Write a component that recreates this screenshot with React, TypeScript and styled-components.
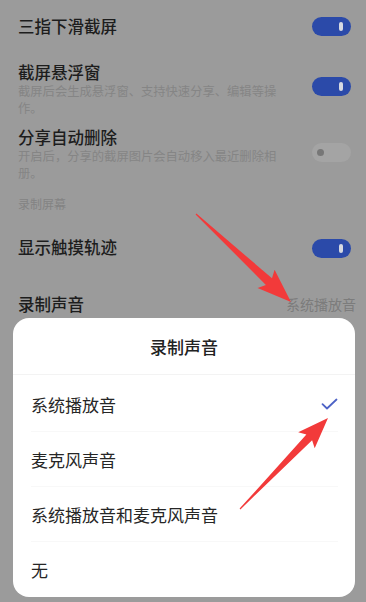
import React from "react";
import styled, { createGlobalStyle } from "styled-components";

const GlobalStyle = createGlobalStyle`
  html, body {
    margin: 0;
    padding: 0;
    background: #9b9b9b;
  }
  body {
    font-family: "Noto Sans CJK SC", "Noto Sans", sans-serif;
  }
`;

type Point = [number, number];

// builds a tapered arrow outline from tail to tip
const arrowPoints = (
  tail: Point,
  tip: Point,
  headLen: number,
  headW: number,
  shaftW: number
) => {
  const dx = tip[0] - tail[0];
  const dy = tip[1] - tail[1];
  const len = Math.hypot(dx, dy);
  const ux = dx / len;
  const uy = dy / len;
  const nx = -uy;
  const ny = ux;
  const bx = tip[0] - ux * headLen;
  const by = tip[1] - uy * headLen;
  const wx = bx - ux * 4;
  const wy = by - uy * 4;
  const pts: Point[] = [
    [tail[0] + nx * 0.6, tail[1] + ny * 0.6],
    [bx + (nx * shaftW) / 2, by + (ny * shaftW) / 2],
    [wx + (nx * headW) / 2, wy + (ny * headW) / 2],
    tip,
    [wx - (nx * headW) / 2, wy - (ny * headW) / 2],
    [bx - (nx * shaftW) / 2, by - (ny * shaftW) / 2],
    [tail[0] - nx * 0.6, tail[1] - ny * 0.6],
  ];
  return pts.map((p) => `${p[0].toFixed(1)},${p[1].toFixed(1)}`).join(" ");
};

const settings = [
  {
    title: "三指下滑截屏",
    on: true,
  },
  {
    title: "截屏悬浮窗",
    sub: "截屏后会生成悬浮窗、支持快速分享、编辑等操作。",
    on: true,
  },
  {
    title: "分享自动删除",
    sub: "开启后，分享的截屏图片会自动移入最近删除相册。",
    on: false,
  },
];

const options = ["系统播放音", "麦克风声音", "系统播放音和麦克风声音", "无"];

const Toggle = ({ on }: { on: boolean }) => (
  <Switch $on={on}>
    <Knob $on={on} />
  </Switch>
);

export default function App() {
  return (
    <Page>
      <GlobalStyle />
      <List>
        {settings.map((s, i) => (
          <Row key={s.title} $gap={[0, 24, 9][i]}>
            <RowText>
              <RowTitle>{s.title}</RowTitle>
              {s.sub && <RowSub>{s.sub}</RowSub>}
            </RowText>
            <ToggleSlot $top={s.sub ? (s.on ? 16 : 17) : 2}>
              <Toggle on={s.on} />
            </ToggleSlot>
          </Row>
        ))}
        <SectionLabel>录制屏幕</SectionLabel>
        <Row $gap={24}>
          <RowText>
            <RowTitle>显示触摸轨迹</RowTitle>
          </RowText>
          <ToggleSlot $top={3}>
            <Toggle on />
          </ToggleSlot>
        </Row>
        <Row $gap={35}>
          <RowText>
            <RowTitle>录制声音</RowTitle>
          </RowText>
          <RowValue>系统播放音</RowValue>
        </Row>
      </List>

      <Sheet>
        <SheetHeader>录制声音</SheetHeader>
        <OptionList>
          {options.map((o, i) => (
            <Option key={o} $last={i === options.length - 1}>
              <span>{o}</span>
              {i === 0 && (
                <svg width="17" height="12" viewBox="0 0 17 12">
                  <path
                    d="M1.5 6.2 L6 10.5 L15.5 1.5"
                    fill="none"
                    stroke="#4d63c6"
                    strokeWidth="1.8"
                    strokeLinecap="round"
                    strokeLinejoin="round"
                  />
                </svg>
              )}
            </Option>
          ))}
        </OptionList>
      </Sheet>

      <Marks width="366" height="602" viewBox="0 0 366 602">
        <polygon
          points={arrowPoints([196, 214], [291, 302], 30, 25, 9)}
          fill="#f23a3a"
        />
        <polygon
          points={arrowPoints([240, 509], [328, 418], 27, 23, 8)}
          fill="#f23a3a"
        />
      </Marks>
    </Page>
  );
}

///////// Styled Components /////////
const Page = styled.div`
  position: relative;
  width: 366px;
  height: 602px;
  overflow: hidden;
  background: #9b9b9b;
`;

const List = styled.div`
  display: flex;
  flex-direction: column;
  padding: 15px 15px 0 18px;
`;

const Row = styled.div<{ $gap: number }>`
  display: flex;
  align-items: flex-start;
  justify-content: space-between;
  margin-top: ${(p) => p.$gap}px;
`;

const RowText = styled.div`
  display: flex;
  flex-direction: column;
  width: 268px;
  flex: none;
`;

const RowTitle = styled.div`
  font-size: 16.5px;
  line-height: 22px;
  font-weight: 500;
  color: #1d1d1d;
`;

const RowSub = styled.div`
  font-size: 12.3px;
  line-height: 17px;
  color: #858585;
`;

const RowValue = styled.div`
  flex: none;
  white-space: nowrap;
  font-size: 14px;
  line-height: 22px;
  color: #7c7c7c;
  margin-right: 2px;
`;

const ToggleSlot = styled.div<{ $top: number }>`
  margin-top: ${(p) => p.$top}px;
  display: flex;
`;

const Switch = styled.div<{ $on: boolean }>`
  position: relative;
  width: 39px;
  height: 19px;
  border-radius: 10px;
  background: ${(p) => (p.$on ? "#2b4aa9" : "#a4a4a4")};
`;

const Knob = styled.div<{ $on: boolean }>`
  position: absolute;
  top: ${(p) => (p.$on ? "5px" : "6px")};
  left: ${(p) => (p.$on ? "27px" : "5px")};
  width: ${(p) => (p.$on ? "4px" : "7px")};
  height: ${(p) => (p.$on ? "9px" : "7px")};
  border-radius: 4px;
  background: ${(p) => (p.$on ? "#d6d9e2" : "#777777")};
`;

const SectionLabel = styled.div`
  margin-top: 13px;
  font-size: 12px;
  line-height: 17px;
  color: #838383;
`;

const Sheet = styled.div`
  position: absolute;
  left: 13px;
  top: 318px;
  width: 342px;
  height: 279px;
  background: #ffffff;
  border-radius: 16px;
  overflow: hidden;
  display: flex;
  flex-direction: column;
`;

const SheetHeader = styled.div`
  height: 59px;
  display: flex;
  align-items: center;
  justify-content: center;
  padding-top: 1px;
  font-size: 17px;
  font-weight: 500;
  color: #222222;
  border-bottom: 1px solid #f3f3f3;
`;

const OptionList = styled.div`
  display: flex;
  flex-direction: column;
  padding: 2px 17px 0 18px;
`;

const Option = styled.div<{ $last: boolean }>`
  height: 55px;
  display: flex;
  align-items: center;
  justify-content: space-between;
  font-size: 17px;
  color: #262626;
  border-bottom: ${(p) => (p.$last ? "none" : "1px solid #f8f8f8")};
  box-sizing: border-box;
`;

const Marks = styled.svg`
  position: absolute;
  left: 0;
  top: 0;
  pointer-events: none;
`;
